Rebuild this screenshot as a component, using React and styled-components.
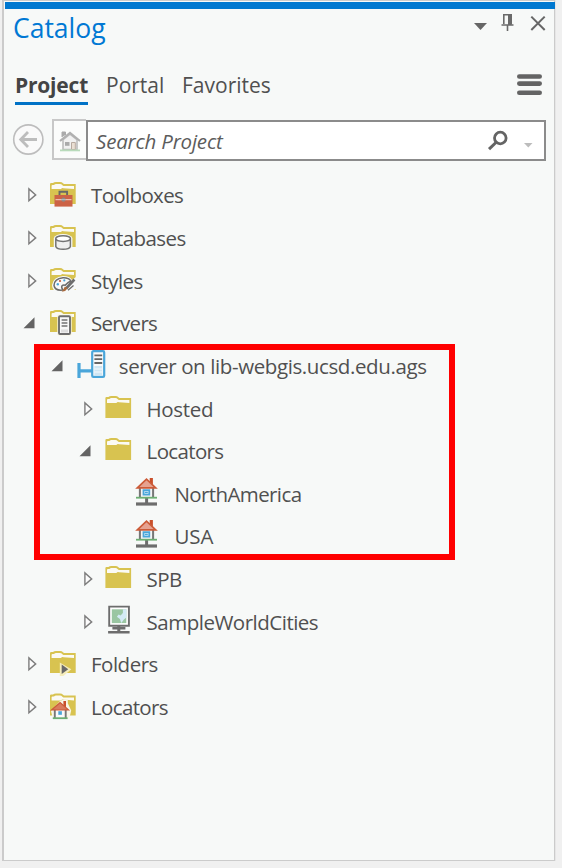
import React from 'react';
import styled, { createGlobalStyle } from 'styled-components';

const Global = createGlobalStyle`
  * { box-sizing: border-box; }
  body { margin: 0; background: #f0f0f0; }
  svg { display: block; flex: none; overflow: visible; }
`;

const Page = styled.div`
  width: 562px;
  height: 868px;
  padding-left: 2px;
  overflow: hidden;
  font-family: 'Open Sans', 'Noto Sans', sans-serif;
  color: #505050;
`;

const Panel = styled.main`
  width: 553px;
  height: 861px;
  border: solid #cbcbcb;
  border-width: 1px 1px 1px 2px;
  background: #f7f9f8;
  box-shadow: 1px 0 #e6e6e6;
  display: flex;
  flex-direction: column;
`;

const AccentBar = styled.div`
  height: 7px;
  margin: 1px -1px 0 1px;
  background: #0078d0;
`;

const TitleBar = styled.header`
  height: 49px;
  padding: 0 8px 0 9px;
  display: flex;
  justify-content: space-between;
`;

const Label = styled.span`
  display: block;
  white-space: pre;
  letter-spacing: ${(p) => p.$ls || 0}px;
`;

const Title = styled(Label)`
  font-size: 26.5px;
  line-height: 38px;
  color: #0078d4;
`;

const WindowButtons = styled.div`
  display: flex;
  gap: 16px;
  padding-top: 4px;
  height: 24px;
`;

const TabBar = styled.nav`
  height: 52px;
  padding: 8px 12px 0 11px;
  display: flex;
  align-items: flex-start;
`;

const Tab = styled(Label)`
  width: ${(p) => p.$w}px;
  height: 39px;
  margin-right: 18px;
  font-size: 21px;
  line-height: 39px;
  font-weight: ${(p) => (p.$active ? 700 : 400)};
  color: ${(p) => (p.$active ? '#444' : '#505050')};
  border-bottom: ${(p) => (p.$active ? '3px solid #0072c6' : '0')};
`;

const MenuButton = styled.div`
  margin-left: auto;
  padding-top: 7px;
`;

const SearchRow = styled.div`
  height: 43px;
  padding: 9px 8px 0 8px;
  display: flex;
  align-items: flex-start;
`;

const HomeButton = styled.div`
  width: 34px;
  height: 41px;
  margin-left: 8px;
  border: 2px solid #c8c8c8;
  border-right: 0;
  background: #fbfcfb;
  display: flex;
  align-items: center;
  justify-content: center;
`;

const SearchField = styled.div`
  flex: 1;
  height: 41px;
  margin-top: 1px;
  border: 2px solid #8b8b8b;
  background: #fff;
  padding: 0 11px 0 8px;
  display: flex;
  align-items: center;
`;

const Placeholder = styled(Label)`
  flex: 1;
  font-size: 20.5px;
  font-style: italic;
  color: #5c5c5c;
`;

const SearchTools = styled.div`
  display: flex;
  gap: 14px;
`;

const Tree = styled.div`
  position: relative;
  padding-top: 21px;
`;

const Row = styled.div`
  height: 42.65px;
  padding-left: ${(p) => 23 + p.$level * 27.8}px;
  display: flex;
  align-items: center;
`;

const Toggle = styled.span`
  width: 22px;
`;

const RowLabel = styled(Label)`
  margin-left: 14px;
  font-size: 20.5px;
  line-height: 30px;
`;

const IconSlot = styled.span`
  width: 28px;
  padding-bottom: 2px;
`;

const Highlight = styled.div`
  position: absolute;
  left: 30px;
  top: 191px;
  width: 421px;
  height: 216px;
  border: 6px solid #f00;
`;

const FolderShape = () => (
  <>
    <path d="M1 26V6Q1 5 2.2 5H4Q5 4 7 4h4q2 0 3 1.3l1 .7h11.7v20z" fill="#d8c350" />
    <path d="M2.6 11V7.8q0-.8 1-.8h1.4q1-1 2-1h4q1.4 0 2.4 1.3l1 .8h10.6V11l-10.5-.8q-1.6-.4-2.5.8z" fill="#fbfaf4" />
  </>
);

const HouseShape = () => (
  <>
    <path d="M5.5 10.5h16.5v9.5H5.5z" fill="#f4f4f4" />
    <path d="M7.2 11v9M20.4 11v9" stroke="#777" strokeWidth="2" />
    <path d="M17 1h3.2v7H17z" fill="#c9502b" />
    <path d="M4.6 10.8l9.2-8.6 9.2 8.6z" fill="#e6a290" stroke="#cc5b38" strokeWidth="1.7" />
    <path d="M10.8 13.2h5.8v4.4h-5.8z" fill="#d8edf8" stroke="#4aa6da" strokeWidth="1.8" />
    <path d="M12.3 15.4h2.8" stroke="#4aa6da" strokeWidth="1.4" />
  </>
);

const glyphs = {
  folder: (
    <g transform="translate(-.6 0)">
      <FolderShape />
    </g>
  ),
  toolbox: (
    <>
      <FolderShape />
      <path d="M10.5 18v-4.2h7.6V18" fill="none" stroke="#686868" strokeWidth="1.9" />
      <path d="M5.5 17h18v11.6h-18z" fill="#cc6346" />
      <path d="M6.5 21.7h16" stroke="#f3d3c8" strokeWidth="1" />
      <circle cx="14.5" cy="21.7" r="2.1" fill="#8a8a8a" />
      <path d="M12 21.6h5" stroke="#bbb" strokeWidth="1" />
    </>
  ),
  database: (
    <>
      <FolderShape />
      <path d="M4.8 28V17q2-4 9.2-4t9.4 4v11z" fill="#f7f9f8" />
      <path d="M6.8 17.5v8q1 2.8 7.3 2.8t7.3-2.8v-8" fill="#f0f0f0" stroke="#737373" strokeWidth="1.5" />
      <ellipse cx="14.1" cy="17.6" rx="7.3" ry="2.8" fill="#fff" stroke="#737373" strokeWidth="1.5" />
    </>
  ),
  styles: (
    <>
      <FolderShape />
      <path d="M3 21q1-8 11-9 7 0 9 4l4-3v12l-6 3H8q-5-2-5-7z" fill="#f7f9f8" />
      <path d="M14 26Q6 27 5 21.5 5 15 14 13.8q6-.2 7.8 3.2-4 2-5.6 4.2-2-.7-3.2.6-1 1.5 1 4.2z" fill="#fafafa" stroke="#6d6d6d" strokeWidth="1.5" />
      <circle cx="11" cy="17" r="1.1" fill="#cc5b38" />
      <circle cx="15.3" cy="16.4" r="1.1" fill="#4aa6da" />
      <circle cx="8.8" cy="20.3" r="1.2" fill="#4aa6da" />
      <path d="M25.4 15.5l-8.3 9" stroke="#6d6d6d" strokeWidth="2.6" />
      <path d="M17.3 23l-1.6-.2q-1 3-3 4.7 4 .6 5.6-3.5z" fill="#a96a3d" />
      <path d="M19 26.3l5.5-4.7" stroke="#6d6d6d" strokeWidth="1.3" />
    </>
  ),
  servers: (
    <>
      <FolderShape />
      <rect x="8.3" y="8.6" width="14.4" height="21" rx="1" fill="#faf6df" />
      <rect x="10" y="10.2" width="11" height="17.8" rx="1" fill="#f8f8f8" stroke="#6d6d6d" strokeWidth="1.9" />
      <path d="M12.6 14h5.8M12.6 17h5.8M12.6 20h5.8" stroke="#737373" strokeWidth="1.6" />
      <path d="M12 23.5h7v3h-7z" fill="#ddd" />
    </>
  ),
  server: (
    <>
      <path d="M2 14v15M3 21.8h12" stroke="#4aa6da" strokeWidth="3.2" />
      <rect x="15.2" y="2.2" width="12" height="25.7" rx="1.2" fill="#fafafa" stroke="#4aa6da" strokeWidth="2.2" />
      <path d="M17.4 6.4h7.8M17.4 10.2h7.8M17.4 14h7.8" stroke="#666" strokeWidth="1.8" />
      <path d="M17.4 17h7.8v9h-7.8z" fill="#cfe6f3" />
      <path d="M17.4 20h7.8M17.4 23h7.8" stroke="#fff" strokeWidth=".8" />
    </>
  ),
  locator: (
    <g transform="translate(.7 0)">
      <HouseShape />
      <path d="M13.9 21v6" stroke="#6d6d6d" strokeWidth="3" />
      <path d="M3.3 20.7h21" stroke="#6cae72" strokeWidth="1.8" />
      <path d="M3.3 27h21" stroke="#6d6d6d" strokeWidth="3.2" />
    </g>
  ),
  map: (
    <g transform="translate(-.6 0)">
      <path d="M4.8 1.6h19.7v19.2H4.8z" fill="#fff" stroke="#6d6d6d" strokeWidth="1.9" />
      <path d="M7.4 4.3h14.5v13.8H7.4z" fill="#9ac6a2" />
      <path d="M22 4.3h-3.5v3.8l-2.3 2.4-2-1-1.7 2.2 3 2.3 1.4 4.1 2.6-3.6 2.5-2z" fill="#d3eaf5" />
      <path d="M14.4 21v6" stroke="#6d6d6d" strokeWidth="3" />
      <path d="M8 23.2h13M3.7 27.3h21.5" stroke="#6d6d6d" strokeWidth="2.4" />
    </g>
  ),
  folders: (
    <>
      <FolderShape />
      <path d="M10.8 15.6v13.5h3.5l8-6.8z" fill="#f5edbb" />
      <path d="M12.7 17.6v9.4l6.5-4.7z" fill="#686868" />
    </>
  ),
  locators: (
    <g transform="translate(0 -.6)">
      <FolderShape />
      <path d="M2 21.6l9-10 4-1.8h3.8v4l3.4 7.2-2 8.6H4z" fill="#f8f6e8" />
      <path d="M5.7 19.5h11.5V29H5.7z" fill="#f9f9f9" />
      <path d="M5.8 20v8.8M16.7 20v8.8" stroke="#777" strokeWidth="1.9" />
      <path d="M14.4 11.6h2.6v6h-2.6z" fill="#c9502b" />
      <path d="M2.8 20.4l8.3-7.2 8.3 7.2z" fill="#d87b5d" stroke="#cc5b38" strokeWidth="1.3" />
      <path d="M9.3 21.8h3.6v3.6H9.3z" fill="#4aa6da" />
      <path d="M3.8 28.8h14.8" stroke="#6cae72" strokeWidth="1.8" />
    </g>
  ),
};

const TreeIcon = ({ name }) => (
  <IconSlot>
    <svg width="28" height="32" viewBox="0 0 28 32">{glyphs[name]}</svg>
  </IconSlot>
);

const Expander = ({ open }) => (
  <Toggle>
    <svg width="12" height="16" viewBox="0 0 12 16">
      {open ? (
        <path d="M7.5 2.2v11H-3.5z" fill="#646464" />
      ) : (
        <path d="M1.9 1.9v11.9L8.7 7.9z" fill="#fcfcfc" stroke="#7d7d7d" strokeWidth="1.4" />
      )}
    </svg>
  </Toggle>
);

const items = [
  { label: 'Toolboxes', level: 0, icon: 'toolbox', ls: -0.65 },
  { label: 'Databases', level: 0, icon: 'database', ls: -0.6 },
  { label: 'Styles', level: 0, icon: 'styles', ls: -0.6 },
  { label: 'Servers', level: 0, icon: 'servers', open: true, ls: -0.7 },
  { label: 'server on lib-webgis.ucsd.edu.ags', level: 1, icon: 'server', open: true, ls: -0.39 },
  { label: 'Hosted', level: 2, icon: 'folder', ls: -0.35 },
  { label: 'Locators', level: 2, icon: 'folder', open: true, ls: -0.65 },
  { label: 'NorthAmerica', level: 3, icon: 'locator', leaf: true, ls: -0.6 },
  { label: 'USA', level: 3, icon: 'locator', leaf: true },
  { label: 'SPB', level: 2, icon: 'folder', ls: -0.6 },
  { label: 'SampleWorldCities', level: 2, icon: 'map', ls: -0.5 },
  { label: 'Folders', level: 0, icon: 'folders', ls: -0.5 },
  { label: 'Locators', level: 0, icon: 'locators', ls: -0.65 },
];

export default function App() {
  return (
    <Page>
      <Global />
      <Panel>
        <AccentBar />
        <TitleBar>
          <Title>Catalog</Title>
          <WindowButtons>
            <svg width="13" height="24" viewBox="0 0 13 24"><path d="M0 10h13l-6.5 7z" fill="#666" /></svg>
            <svg width="12" height="24" viewBox="0 0 12 24">
              <path d="M.8 11V1.8h7.4V11M-1.5 12h12M4.5 12v6" fill="none" stroke="#6a6a6a" strokeWidth="1.6" />
              <path d="M5 1h3.7v11H5z" fill="#6a6a6a" />
            </svg>
            <svg width="15" height="24" viewBox="0 0 15 24"><path d="M.3 3.6l13.4 13.4M13.7 3.6L.3 17" stroke="#666" strokeWidth="2" /></svg>
          </WindowButtons>
        </TitleBar>
        <TabBar>
          <Tab $w={73} $ls={-0.2} $active>Project</Tab>
          <Tab $w={58}>Portal</Tab>
          <Tab $w={90}>Favorites</Tab>
          <MenuButton>
            <svg width="25" height="24" viewBox="0 0 25 24">
              <path d="M2.3 3.5h20.4M2.3 10.6h20.4M2.3 19.7h20.4" stroke="#646464" strokeWidth="4.6" strokeLinecap="round" />
            </svg>
          </MenuButton>
        </TabBar>
        <SearchRow>
          <svg width="32" height="41" viewBox="0 0 32 41">
            <circle cx="16.3" cy="20.5" r="14.6" fill="#fafafa" stroke="#bdbdbd" strokeWidth="1.6" />
            <path d="M25 20.5H9.5M16 13l-7.3 7.5 7.3 7.5" fill="none" stroke="#bdbdbd" strokeWidth="2.8" />
          </svg>
          <HomeButton>
            <svg width="22" height="22" viewBox="0 0 22 22">
              <g transform="translate(0 1)">
                <path d="M4 9.5v10h14v-10L11 4z" fill="#f1f1f1" stroke="#bcbcbc" strokeWidth="1.6" />
                <path d="M3 7V2h3.5v3" fill="#aaa" stroke="#aaa" />
                <path d="M1 11l10-8.2L21 11" fill="none" stroke="#b0b0b0" strokeWidth="2.2" />
                <path d="M6 12h4.5v3.8H6z" fill="#aaa" />
                <path d="M12.5 12.5h3.8v7h-3.8z" fill="#eadfd3" stroke="#b8aaa0" />
                <path d="M1 20.4h20" stroke="#b9dbbb" strokeWidth="1.8" />
              </g>
            </svg>
          </HomeButton>
          <SearchField>
            <Placeholder $ls={-0.2}>Search Project</Placeholder>
            <SearchTools>
              <svg width="22" height="22" viewBox="0 0 22 22">
                <circle cx="13.3" cy="8" r="5.8" fill="none" stroke="#646464" strokeWidth="2.8" />
                <path d="M9.5 12L2 19.2" stroke="#646464" strokeWidth="3" />
              </svg>
              <svg width="10" height="22" viewBox="0 0 10 22"><path d="M1 13h8.5l-4.2 4.5z" fill="#bcbcbc" /></svg>
            </SearchTools>
          </SearchField>
        </SearchRow>
        <Tree>
          {items.map((it, i) => (
            <Row key={i} $level={it.level}>
              {it.leaf ? <Toggle /> : <Expander open={it.open} />}
              <TreeIcon name={it.icon} />
              <RowLabel $ls={it.ls}>{it.label}</RowLabel>
            </Row>
          ))}
          <Highlight />
        </Tree>
      </Panel>
    </Page>
  );
}
